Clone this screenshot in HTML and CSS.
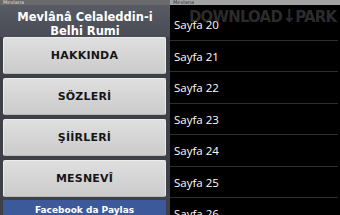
FILE: index.html
```html
<!DOCTYPE html>
<html>
<head>
<meta charset="utf-8">
<link rel="stylesheet" href="styles.css">
</head>
<body>
<div class="left">
  <div class="titlebar">Mevlana</div>
  <div class="header">Mevlânâ Celaleddin-i<br>Belhi Rumi</div>
  <div class="buttons">
    <div class="btn">HAKKINDA</div>
    <div class="btn">SÖZLERİ</div>
    <div class="btn">ŞİİRLERİ</div>
    <div class="btn">MESNEVÎ</div>
    <div class="fb">Facebook da Paylas</div>
  </div>
</div>
<div class="right">
  <div class="titlebar2">Mevlana</div>
  <div class="list">
    <div class="row">Sayfa 20</div>
    <div class="row">Sayfa 21</div>
    <div class="row">Sayfa 22</div>
    <div class="row">Sayfa 23</div>
    <div class="row">Sayfa 24</div>
    <div class="row">Sayfa 25</div>
    <div class="row">Sayfa 26</div>
  </div>
  <div class="watermark">DOWNLOAD<span class="arrow">↓</span>PARK</div>
</div>
</body>
</html>
```
FILE: styles.css
```css
html, body {
  margin: 0;
  padding: 0;
}
body {
  width: 340px;
  height: 215px;
  overflow: hidden;
  display: flex;
  background: #000;
}
.left {
  width: 170px;
  height: 215px;
  overflow: hidden;
  background: #3e4048;
  display: flex;
  flex-direction: column;
  font-family: "DejaVu Sans", sans-serif;
}
.left > * {
  flex-shrink: 0;
}
.titlebar {
  height: 5px;
  background: #6a6a6c;
  color: #ddd;
  font-size: 5px;
  line-height: 5px;
  padding-left: 3px;
  overflow: hidden;
}
.header {
  height: 32px;
  background: linear-gradient(#585a64, #4a4c55);
  color: #fff;
  font-weight: bold;
  font-size: 11.5px;
  line-height: 13.5px;
  text-align: center;
  padding-top: 6px;
  box-sizing: border-box;
}
.buttons {
  display: flex;
  flex-direction: column;
  gap: 4px;
  padding: 0 4px 0 3px;
}
.btn {
  flex-shrink: 0;
  height: 37px;
  box-sizing: border-box;
  background: linear-gradient(#dfdfdf, #cbcbcb);
  border: 1px solid #ececec;
  border-bottom-color: #b8b8b8;
  border-radius: 2px;
  display: flex;
  align-items: center;
  justify-content: center;
  font-weight: bold;
  font-size: 11px;
  color: #161616;
  letter-spacing: 0.2px;
}
.fb {
  flex-shrink: 0;
  margin-top: -1px;
  height: 20px;
  background: #3c5a9a;
  color: #fff;
  font-weight: bold;
  font-size: 9px;
  text-align: center;
  padding-top: 5px;
  box-sizing: border-box;
}
.right {
  flex: 1;
  position: relative;
  background: #000;
  font-family: "Open Sans", sans-serif;
}
.titlebar2 {
  height: 5px;
  background: #a3a3a3;
  color: #333;
  font-size: 5px;
  line-height: 5px;
  padding-left: 3px;
  overflow: hidden;
  font-family: "DejaVu Sans", sans-serif;
}
.list {
  padding-top: 4px;
}
.row {
  height: 29.5px;
  border-bottom: 1px solid #2e2e2e;
  margin-right: 2px;
  color: #fff;
  font-size: 11.5px;
  display: flex;
  align-items: center;
  padding-left: 4px;
  padding-top: 1px;
  box-sizing: content-box;
}
.watermark {
  position: absolute;
  left: 19px;
  top: 5px;
  color: rgba(100, 100, 100, 0.45);
  font-family: "DejaVu Sans", sans-serif;
  font-weight: bold;
  font-size: 16px;
  letter-spacing: -0.8px;
  transform: scaleX(0.93);
  transform-origin: left;
  white-space: nowrap;
}
.arrow {
  font-size: 18px;
}
```
